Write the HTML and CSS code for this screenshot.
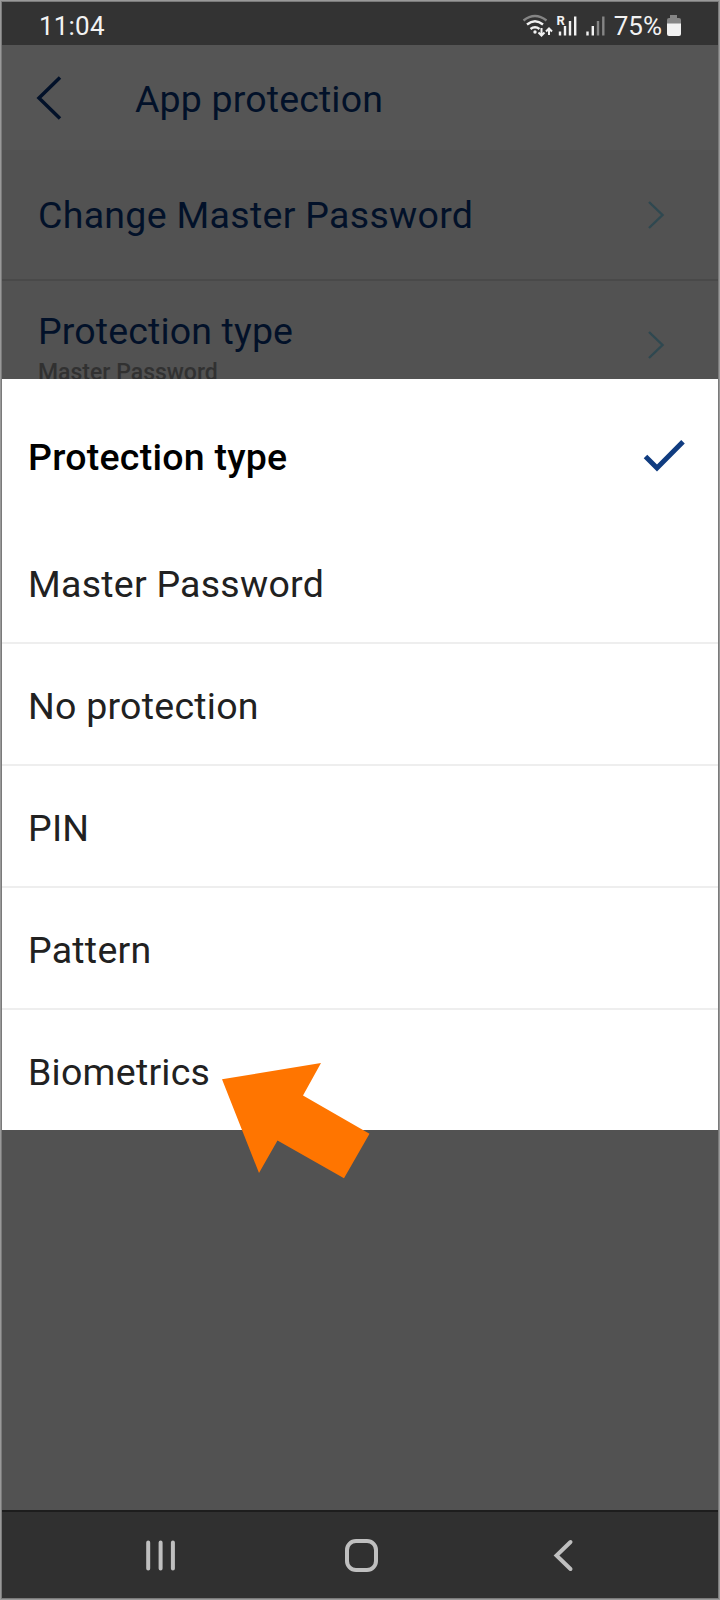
FILE: index.html
```html
<!DOCTYPE html>
<html lang="en">
<head>
  <meta charset="UTF-8">
  <title>App protection</title>
  <meta name="viewport" content="width=device-width, initial-scale=1.0">
  <link rel="stylesheet" href="styles.css">
</head>
<body>
  <div class="phone">
    <div class="status-bar">
      <span class="clock">11:04</span>
      <div class="status-icons">
        <svg class="signals" width="86" height="28" viewBox="522 12 86 28" fill="none" stroke="#f2f2f2" stroke-width="2.4">
          <path stroke="#858585" d="M523.5 20.5Q535 11.500 546.500 20.500"/>
          <path d="M527 24.500Q535 18 543 24.500M530.500 29Q535 25.500 539.500 29"/>
          <circle cx="535" cy="32" r="1.700" fill="#f2f2f2" stroke="none"/>
          <path stroke-width="2" d="M541.500 28V35.500M538.500 32.500L541.500 35.500L544.500 32.500M549 35V28.500M546 31.500L549 28.500L552 31.500"/>
          <path d="M560 31.500V35.500M565 26V35.500M570 21V35.500M575.200 16.500V35.500M587.500 31.500V35.500M592.800 26V35.500"/>
          <path stroke="#858585" d="M598 21V35.500M603.300 16.500V35.500"/>
          <text class="roaming" x="556.500" y="25">R</text>
        </svg>
        <span class="battery-level">75%</span>
        <svg class="battery" width="16" height="22" viewBox="0 0 16 22">
          <path fill="#858585" d="M4 0H11V3H13Q15 3 15 5V9H1V5Q1 3 3 3H4Z"/>
          <path fill="#f2f2f2" d="M1 8.500H15V19Q15 21 13 21H3Q1 21 1 19Z"/>
        </svg>
      </div>
    </div>
    <div class="app-header">
      <svg class="back" width="28" height="46" viewBox="0 0 28 46">
        <path d="M24 2.500L3 23L24 43.500"/>
      </svg>
      <h1>App protection</h1>
    </div>
    <div class="settings">
      <div class="setting">
        <div class="setting-name">Change Master Password</div>
        <svg class="chevron" width="18" height="30" viewBox="0 0 18 30">
          <path d="M2 2L15.500 15L2 28"/>
        </svg>
      </div>
      <div class="setting">
        <div>
          <div class="setting-name">Protection type</div>
          <div class="setting-value">Master Password</div>
        </div>
        <svg class="chevron" width="18" height="30" viewBox="0 0 18 30">
          <path d="M2 2L15.500 15L2 28"/>
        </svg>
      </div>
    </div>
    <div class="nav-bar">
      <svg width="32" height="34" viewBox="0 0 32 34">
        <path d="M3.200 3.500V29.500M15.600 3.500V29.500M27.900 3.500V29.500"/>
      </svg>
      <svg width="34" height="34" viewBox="0 0 34 34">
        <rect x="2" y="2" width="29" height="29" rx="9"/>
      </svg>
      <svg width="28" height="34" viewBox="0 0 28 34">
        <path d="M24.500 3L10.500 16.500L24.500 30"/>
      </svg>
    </div>

    <!-- Bottom sheet over the settings list -->
    <div class="sheet">
      <div class="sheet-header">
        <h2>Protection type</h2>
        <svg class="check" width="44" height="34" viewBox="0 0 44 34">
          <path d="M2.500 16.500L14 28L40 1.800"/>
        </svg>
      </div>
      <ul class="options">
        <li>Master Password</li>
        <li>No protection</li>
        <li>PIN</li>
        <li>Pattern</li>
        <li>Biometrics</li>
      </ul>
    </div>
    <svg class="pointer" width="148" height="116" viewBox="0 0 148 116">
      <path d="M0 16.300L99 0L81 32.500L147.500 70.700L122 115.200L55.500 77.500L37 110Z"/>
    </svg>
  </div>
</body>
</html>
```
FILE: styles.css
```css
* { box-sizing: border-box; margin: 0; padding: 0; }
body {
  font-family: Roboto, Arial, sans-serif;
  background: #535353;
}
svg {
  display: block;
  flex-shrink: 0;
}
.phone {
  position: relative;
  display: flex;
  flex-direction: column;
  width: 720px;
  height: 1600px;
  border: 1px solid #999;
  box-shadow: inset 0 0 0 1px #7a7a7a;
  padding: 1px;
  overflow: hidden;
}
.status-bar {
  display: flex;
  justify-content: space-between;
  align-items: center;
  height: 43px;
  padding: 5px 36px 0 37px;
  background: #333;
  color: #f2f2f2;
  font-size: 26px;
}
.clock {
  letter-spacing: 0.2px;
}
.status-icons {
  display: flex;
  align-items: center;
}
.roaming {
  font-size: 13px;
  font-weight: 700;
  fill: #f2f2f2;
  stroke: none;
}
.battery-level {
  margin-left: 6px;
}
.battery {
  margin-left: 4px;
}
.app-header {
  display: flex;
  align-items: center;
  height: 105px;
  padding: 1px 0 0 34px;
  background: #555;
}
.app-header h1 {
  margin-left: 71px;
  padding-top: 1px;
  font-size: 37.5px;
  font-weight: 400;
  letter-spacing: 0.15px;
  color: #021129;
}
.back {
  fill: none;
  stroke: #021129;
  stroke-width: 3.5;
}
.settings {
  flex: 1;
  background: #525252;
}
.setting {
  display: flex;
  justify-content: space-between;
  align-items: center;
  height: 131px;
  padding: 0 53px 0 36px;
  border-bottom: 2px solid #494949;
}
.setting:last-child {
  height: 128px;
  border-bottom: none;
}
.setting-name {
  font-size: 37.5px;
  line-height: 46px;
  letter-spacing: 0.3px;
  color: #021129;
}
.setting-value {
  padding-top: 3px;
  font-size: 23px;
  font-weight: 500;
  line-height: 32px;
  color: #313131;
}
.setting:last-child .setting-name {
  padding-top: 7px;
  letter-spacing: 0.15px;
}
.chevron {
  fill: none;
  stroke: #2f4850;
  stroke-width: 2.4;
}
.nav-bar {
  display: flex;
  justify-content: space-between;
  align-items: center;
  height: 88px;
  padding: 2px 144px 0 143px;
  border-top: 2px solid #1d1d1d;
  background: #303030;
}
.nav-bar svg {
  fill: none;
  stroke: #bfbfbf;
  stroke-width: 4;
  stroke-linecap: round;
}
.sheet {
  position: absolute;
  top: 378px;
  left: 1px;
  right: 1px;
  height: 751px;
  background: #fff;
}
.sheet-header {
  display: flex;
  justify-content: space-between;
  align-items: center;
  height: 143px;
  padding: 12px 31px 0 26px;
}
.sheet-header h2 {
  padding-top: 1px;
  font-size: 37.5px;
  font-weight: 500;
  letter-spacing: 0.25px;
  color: #000;
}
.check {
  fill: none;
  stroke: #103c80;
  stroke-width: 5;
}
.options {
  list-style: none;
}
.options li {
  display: flex;
  align-items: center;
  height: 122px;
  padding: 4px 26px 0;
  border-bottom: 2px solid #eee;
  font-size: 37.5px;
  letter-spacing: 0.25px;
  color: #212121;
}
.options li:last-child {
  height: 120px;
  border-bottom: none;
}
/* Callout arrow pointing at the last option */
.pointer {
  position: absolute;
  top: 1062px;
  left: 221px;
  fill: #ff7500;
}
```
